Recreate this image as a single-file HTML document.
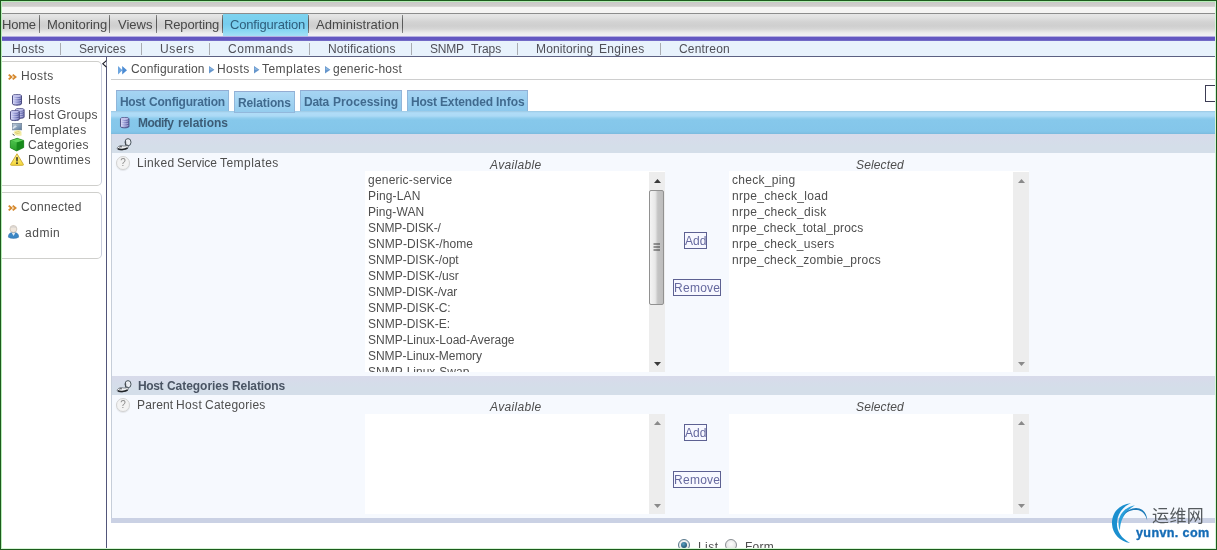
<!DOCTYPE html>
<html><head><meta charset="utf-8"><title>Centreon - Modify relations</title>
<style>
html,body{margin:0;padding:0;}
body{width:1217px;height:550px;overflow:hidden;position:relative;background:#fff;font-family:"Liberation Sans","Noto Sans CJK SC",sans-serif;font-size:12px;color:#4a4a4a;}
.a{position:absolute;}
.t{position:absolute;white-space:nowrap;line-height:14px;height:14px;font-size:12px;z-index:10;}
svg{position:absolute;overflow:visible;}
#frame{left:0;top:0;width:1215px;height:548px;border:1px solid #1d5c1d;z-index:50;}
#frame2{left:1px;top:1px;width:1213px;height:546px;border:1px solid #b6eeb6;border-right-color:#d6f5d6;border-bottom-color:#d6f5d6;z-index:49;}
#top1{left:0;top:0;width:1217px;height:7px;background:linear-gradient(#c4c4c4 0,#c6c6c6 2px,#cdcbca 3px,#d0cdcc 6px,#e0dedd 7px);}
#top2{left:0;top:7px;width:1217px;height:6px;background:#f5f4f3;}
#menu{left:0;top:13px;width:1217px;height:23px;background:linear-gradient(#8c8c8c 0,#8c8c8c 1px,#e6e6e6 1px,#e2e2e2 4px,#d3d3d3 9px,#cfcfcf 13px,#d6d6d6 16px,#ececec 20px,#f1f0f4 23px);}
.msep{position:absolute;top:15px;width:1px;height:18px;background:linear-gradient(#8a8a8a,#5a5a5a 30%,#5a5a5a 70%,#8a8a8a);}
#cfg{left:223px;top:14px;width:85px;height:22px;background:linear-gradient(#7ed3ef 0,#76cdee 10px,#86d6f2 16px,#a4e0f6 22px);}
#purple{left:0;top:36px;width:1217px;height:5px;background:linear-gradient(#b9b3e2 0,#b0aade 1px,#6357c1 1px,#6357c1 4px,#6a60c4 4px,#7a74c8 5px);}
#sub{left:0;top:41px;width:1217px;height:15px;background:#e8f2fc;}
#subline{left:0;top:56px;width:1217px;height:1px;background:#5c6082;}
.ssep{position:absolute;top:43px;width:1px;height:12px;background:#a9acb2;}
.sbox{position:absolute;border:1px solid #cfcfcc;border-left:none;border-right-color:#c9cddd;border-radius:0 5px 5px 0;background:#fff;box-sizing:border-box;}
#vline{left:106px;top:57px;width:1px;height:493px;background:#52567a;}
#crumbline{left:111px;top:79px;width:1106px;height:1px;background:#cecece;}
.tab{position:absolute;top:90px;height:22px;box-sizing:border-box;border:1px solid #90b6da;border-top-color:#94acd2;border-bottom:none;background:linear-gradient(#a6d4f2,#8cc8ec);}
.tab.act{top:91px;height:22px;border-bottom:1px solid #92b8dc;background:linear-gradient(#b0daf5,#94ccee);z-index:3;}
#hdr{left:111px;top:111px;width:1106px;height:23px;background:linear-gradient(#9cc6e0 0,#a6d4f0 1px,#b0dcf7 2px,#acdaf6 5px,#92ceee 7px,#86c8eb 9px,#84c6ea 20px,#80c0e4 22px,#7ab8dc 23px);}
.grayrow{position:absolute;left:111px;width:1106px;background:linear-gradient(#d8daea 0,#d6dcea 5px,#d4dee9 12px,#d4dee9 100%);}
.row{position:absolute;left:111px;width:1106px;background:#f6f9fe;}
.lb{position:absolute;background:#fff;width:300px;}
.sb{position:absolute;right:0;top:0;width:16px;height:100%;background:#ededed;}
.thumb{position:absolute;box-sizing:border-box;border:1px solid #919191;border-radius:2px;background:linear-gradient(90deg,#f4f4f4 0,#e8e8e8 40%,#c4c4c4 60%,#bdbdbd 100%);}
.btn{position:absolute;border:1px solid #5d6192;background:#f7f8ff;box-sizing:border-box;height:17px;}
.radio{position:absolute;width:12px;height:12px;border-radius:50%;box-sizing:border-box;border:1px solid #8a8f94;background:radial-gradient(circle at 50% 40%,#fdfdfd 0,#d8d8d8 100%);}
.q{position:absolute;width:14px;height:14px;box-sizing:border-box;border:1px solid #d2d2d2;border-radius:50%;background:#f3f3f3;box-shadow:0 1px 1px rgba(0,0,0,0.08);color:#8c8c8c;font-size:10px;line-height:12px;text-align:center;will-change:transform;z-index:4;}
#wm1{left:1152px;top:504.5px;font-size:17px;line-height:24px;height:24px;color:#555a5e;letter-spacing:0.4px;will-change:transform;white-space:nowrap;z-index:5;}
#wm2{left:1135.5px;top:523px;font-size:12.6px;line-height:20px;font-weight:bold;color:#156cb6;letter-spacing:0.35px;-webkit-text-stroke:0.35px #156cb6;will-change:transform;white-space:nowrap;z-index:5;}
</style></head><body>
<div id="top1" class="a"></div>
<div id="top2" class="a"></div>
<div id="menu" class="a"></div>
<div id="cfg" class="a"></div>
<i class="msep" style="left:39px"></i><i class="msep" style="left:109px"></i><i class="msep" style="left:156px"></i><i class="msep" style="left:222px"></i><i class="msep" style="left:308px"></i><i class="msep" style="left:402px"></i>
<div id="purple" class="a"></div>
<div id="sub" class="a"></div>
<div id="subline" class="a"></div>
<i class="ssep" style="left:60px"></i><i class="ssep" style="left:141px"></i><i class="ssep" style="left:209px"></i><i class="ssep" style="left:309px"></i><i class="ssep" style="left:411px"></i><i class="ssep" style="left:517px"></i><i class="ssep" style="left:660px"></i>

<!-- sidebar -->
<div class="sbox" style="left:0;top:61px;width:102px;height:125px;"></div>
<div class="sbox" style="left:0;top:192px;width:102px;height:67px;"></div>
<div id="vline" class="a"></div>
<svg width="0" height="0" style="left:0;top:0">
  <defs>
    <linearGradient id="gdb" x1="0" y1="0" x2="1" y2="0"><stop offset="0" stop-color="#dcdef8"/><stop offset="0.38" stop-color="#a0a4dc"/><stop offset="1" stop-color="#4a4e98"/></linearGradient>
    <linearGradient id="gcube1" x1="0" y1="0" x2="0" y2="1"><stop offset="0" stop-color="#4cc04c"/><stop offset="1" stop-color="#28a028"/></linearGradient>
    <linearGradient id="gtpl" x1="0" y1="0" x2="1" y2="1"><stop offset="0" stop-color="#c4d0dc"/><stop offset="1" stop-color="#58789c"/></linearGradient>
    <linearGradient id="gwarn" x1="0" y1="0" x2="0" y2="1"><stop offset="0" stop-color="#fdf08a"/><stop offset="1" stop-color="#f4d63a"/></linearGradient>
  </defs>
</svg>
<svg style="left:8px;top:73.5px" width="8" height="6"><path d="M0.7 0.6 L3.5 3 L0.7 5.4 M4.7 0.6 L7.5 3 L4.7 5.4" fill="none" stroke="#d68a30" stroke-width="1.9"/></svg>
<svg style="left:8px;top:204.5px" width="8" height="6"><path d="M0.7 0.6 L3.5 3 L0.7 5.4 M4.7 0.6 L7.5 3 L4.7 5.4" fill="none" stroke="#d68a30" stroke-width="1.9"/></svg>
<svg style="left:12px;top:94px" width="10" height="12"><path d="M0.5 1.8 C0.5 0.2 9.5 0.2 9.5 1.8 V9.8 C9.5 11.6 0.5 11.6 0.5 9.8 Z" fill="url(#gdb)" stroke="#4c4c80" stroke-width="1"/>
      <path d="M1 3.9 C2.5 4.9 7.5 4.9 9 3.9 M1 6.3 C2.5 7.3 7.5 7.3 9 6.3 M1 8.6 C2.5 9.6 7.5 9.6 9 8.6" fill="none" stroke="#e4e4fa" stroke-width="0.7" opacity="0.8"/>
      <ellipse cx="5" cy="1.9" rx="4" ry="1.1" fill="#c8c8ee" opacity="0.9"/></svg>
<svg style="left:14.5px;top:108px" width="10" height="12"><g transform="scale(0.96,0.93)"><path d="M0.5 1.8 C0.5 0.2 9.5 0.2 9.5 1.8 V9.8 C9.5 11.6 0.5 11.6 0.5 9.8 Z" fill="url(#gdb)" stroke="#4c4c80" stroke-width="1"/>
      <path d="M1 3.9 C2.5 4.9 7.5 4.9 9 3.9 M1 6.3 C2.5 7.3 7.5 7.3 9 6.3 M1 8.6 C2.5 9.6 7.5 9.6 9 8.6" fill="none" stroke="#e4e4fa" stroke-width="0.7" opacity="0.8"/>
      <ellipse cx="5" cy="1.9" rx="4" ry="1.1" fill="#c8c8ee" opacity="0.9"/></g></svg>
<svg style="left:10px;top:110.2px" width="10" height="12"><g transform="scale(0.98,0.95)"><path d="M0.5 1.8 C0.5 0.2 9.5 0.2 9.5 1.8 V9.8 C9.5 11.6 0.5 11.6 0.5 9.8 Z" fill="url(#gdb)" stroke="#4c4c80" stroke-width="1"/>
      <path d="M1 3.9 C2.5 4.9 7.5 4.9 9 3.9 M1 6.3 C2.5 7.3 7.5 7.3 9 6.3 M1 8.6 C2.5 9.6 7.5 9.6 9 8.6" fill="none" stroke="#e4e4fa" stroke-width="0.7" opacity="0.8"/>
      <ellipse cx="5" cy="1.9" rx="4" ry="1.1" fill="#c8c8ee" opacity="0.9"/></g></svg>
<svg style="left:12px;top:123px" width="10" height="13">
  <rect x="0.3" y="0.3" width="9.4" height="6.6" fill="url(#gtpl)" stroke="#6c7c90" stroke-width="0.6"/>
  <path d="M0.6 4.5 L3.2 2.2 L5 3.6 L0.6 6.5Z" fill="#e8eef4" opacity="0.8"/>
  <path d="M1.5 9.5 C3 6.5 6 6.2 9.4 8.4 L9.6 12.4 C6.5 13.4 3 12.8 1.5 9.5Z" fill="#f4eca8"/>
  <path d="M3 9.6 L7.6 8.2 M3.6 11 L8.2 9.8" stroke="#d8c868" stroke-width="0.8" fill="none"/>
  <path d="M0.6 11.2 L2.6 12.4" stroke="#44443c" stroke-width="1"/>
</svg>
<svg style="left:10px;top:138.3px" width="14" height="13.2">
  <path d="M0.3 2.6 L7.2 0.3 L13.7 2.4 L13.7 9.6 L6.6 13 L0.3 9.8 Z" fill="#27a127"/>
  <path d="M0.3 2.6 L7.2 0.3 L13.7 2.4 L6.8 4.6 Z" fill="#5fd25a"/>
  <path d="M0.3 2.6 L6.8 4.6 L6.6 13 L0.3 9.8 Z" fill="url(#gcube1)"/>
  <path d="M6.8 4.6 L13.7 2.4 L13.7 9.6 L6.6 13 Z" fill="#178a1c"/>
  <path d="M0.3 2.6 L7.2 0.3 L13.7 2.4 L13.7 9.6 L6.6 13 L0.3 9.8 Z" fill="none" stroke="#1d7a1d" stroke-width="0.6"/>
</svg>
<svg style="left:10px;top:153px" width="14" height="13">
  <path d="M7 0.8 L13.4 11.4 Q13.6 12.3 12.6 12.3 L1.4 12.3 Q0.4 12.3 0.6 11.4 Z" fill="url(#gwarn)" stroke="#c9a62a" stroke-width="0.9" stroke-linejoin="round"/>
  <path d="M6.2 4.2 h1.6 l-0.3 4.4 h-1 Z" fill="#1c1c1c"/><rect x="6.2" y="9.4" width="1.6" height="1.5" fill="#1c1c1c"/>
</svg>
<svg style="left:7.5px;top:225.3px" width="11" height="13.6">
  <path d="M0.4 12.2 C0.2 8.6 2.4 7.4 5.4 7.4 C8.6 7.4 10.8 8.6 10.6 12.2 C8 13.8 3 13.8 0.4 12.2 Z" fill="#3b86c4" stroke="#2a6aa4" stroke-width="0.5"/>
  <path d="M3.8 8 L5.6 11 L7.2 8 Z" fill="#dfeaf4"/>
  <circle cx="5.4" cy="4" r="3.5" fill="#efe6dc" stroke="#b8aca0" stroke-width="0.6"/>
  <path d="M2.2 3.2 C3 0.2 8 0.2 8.8 3.4 C7 2.4 4 2.4 2.2 3.2Z" fill="#d8d4d0"/>
</svg>
<svg style="left:102px;top:60px" width="5" height="8"><path d="M4.4 0.6 L0.8 3.8 L4.4 7" fill="#fff" stroke="#1c1c28" stroke-width="1.1"/></svg>
<svg style="left:118.4px;top:65.6px" width="9.2" height="8.6">
  <path d="M0 0 L4.4 4.3 L0 8.6 Z" fill="#6ea6e0"/><path d="M4.2 0 L9 4.3 L4.2 8.6 Z" fill="#4c8cd4"/>
</svg>
<svg style="left:208.6px;top:66.4px" width="6" height="8"><path d="M0 0 L5.4 3.7 L0 7.4 Z" fill="#6696cc"/><path d="M0.6 1.2 L4.2 3.7 L0.6 3.7 Z" fill="#8eb8e2"/></svg>
<svg style="left:253.5px;top:66.4px" width="6" height="8"><path d="M0 0 L5.4 3.7 L0 7.4 Z" fill="#6696cc"/><path d="M0.6 1.2 L4.2 3.7 L0.6 3.7 Z" fill="#8eb8e2"/></svg>
<svg style="left:324.5px;top:66.4px" width="6" height="8"><path d="M0 0 L5.4 3.7 L0 7.4 Z" fill="#6696cc"/><path d="M0.6 1.2 L4.2 3.7 L0.6 3.7 Z" fill="#8eb8e2"/></svg>
<svg style="left:119.7px;top:117.2px;z-index:4" width="10" height="12"><g transform="scale(0.94,0.97)"><path d="M0.5 1.8 C0.5 0.2 9.5 0.2 9.5 1.8 V9.8 C9.5 11.6 0.5 11.6 0.5 9.8 Z" fill="url(#gdb)" stroke="#4c4c80" stroke-width="1"/>
      <path d="M1 3.9 C2.5 4.9 7.5 4.9 9 3.9 M1 6.3 C2.5 7.3 7.5 7.3 9 6.3 M1 8.6 C2.5 9.6 7.5 9.6 9 8.6" fill="none" stroke="#e4e4fa" stroke-width="0.7" opacity="0.8"/>
      <ellipse cx="5" cy="1.9" rx="4" ry="1.1" fill="#c8c8ee" opacity="0.9"/></g></svg>
<svg style="left:117px;top:137.8px;z-index:4" width="15" height="12"><path d="M0.4 9.6 C1.6 7.8 4.2 7.2 6.6 8 C8 8.2 9.4 7.8 10.8 7.4 C11.8 8.2 11.4 9.8 10 10.6 C7.4 11.8 3.4 12.2 1.6 11.6 C0.4 11.2 0 10.4 0.4 9.6 Z" fill="#f2f4f6" stroke="#50565e" stroke-width="0.7"/>
      <path d="M0.8 10.6 C2.6 12 7.4 11.8 10.6 10" fill="none" stroke="#202428" stroke-width="1.5"/>
      <path d="M2.4 9.2 C3.2 8.6 4.4 8.6 5 9" fill="none" stroke="#2c3036" stroke-width="1"/>
      <ellipse cx="11" cy="4.2" rx="3" ry="3.6" fill="#eef1f4" fill-opacity="0.85" stroke="#4c5860" stroke-width="1"/>
      <path d="M8.6 3.2 L8.8 7.4" fill="none" stroke="#3c4248" stroke-width="1"/>
      <path d="M8.6 7.2 C9.6 6.6 11 7 11.6 7.8" fill="none" stroke="#6a7078" stroke-width="0.9"/></svg>
<svg style="left:117px;top:379.8px;z-index:4" width="15" height="12"><path d="M0.4 9.6 C1.6 7.8 4.2 7.2 6.6 8 C8 8.2 9.4 7.8 10.8 7.4 C11.8 8.2 11.4 9.8 10 10.6 C7.4 11.8 3.4 12.2 1.6 11.6 C0.4 11.2 0 10.4 0.4 9.6 Z" fill="#f2f4f6" stroke="#50565e" stroke-width="0.7"/>
      <path d="M0.8 10.6 C2.6 12 7.4 11.8 10.6 10" fill="none" stroke="#202428" stroke-width="1.5"/>
      <path d="M2.4 9.2 C3.2 8.6 4.4 8.6 5 9" fill="none" stroke="#2c3036" stroke-width="1"/>
      <ellipse cx="11" cy="4.2" rx="3" ry="3.6" fill="#eef1f4" fill-opacity="0.85" stroke="#4c5860" stroke-width="1"/>
      <path d="M8.6 3.2 L8.8 7.4" fill="none" stroke="#3c4248" stroke-width="1"/>
      <path d="M8.6 7.2 C9.6 6.6 11 7 11.6 7.8" fill="none" stroke="#6a7078" stroke-width="0.9"/></svg>
<!-- scrollbar arrows -->
<svg style="left:654px;top:179.3px;z-index:6" width="7" height="4" fill="#3a3a3a"><path d="M0 4 L3.5 0 L7 4 Z"/></svg>
<svg style="left:654px;top:361.5px;z-index:6" width="7" height="4" fill="#3a3a3a"><path d="M0 0 L3.5 4 L7 0 Z"/></svg>
<svg style="left:653px;top:243px;z-index:6" width="8" height="9"><path d="M0.5 1 H7 M0.5 4 H7 M0.5 7 H7" stroke="#3c3c3c" stroke-width="1.2"/></svg>
<svg style="left:1018px;top:179.3px;z-index:6" width="7" height="4" fill="#8a8a8a"><path d="M0 4 L3.5 0 L7 4 Z"/></svg>
<svg style="left:1018px;top:361.5px;z-index:6" width="7" height="4" fill="#8a8a8a"><path d="M0 0 L3.5 4 L7 0 Z"/></svg>
<svg style="left:654px;top:421.3px;z-index:6" width="7" height="4" fill="#8a8a8a"><path d="M0 4 L3.5 0 L7 4 Z"/></svg>
<svg style="left:654px;top:503.5px;z-index:6" width="7" height="4" fill="#8a8a8a"><path d="M0 0 L3.5 4 L7 0 Z"/></svg>
<svg style="left:1018px;top:421.3px;z-index:6" width="7" height="4" fill="#8a8a8a"><path d="M0 4 L3.5 0 L7 4 Z"/></svg>
<svg style="left:1018px;top:503.5px;z-index:6" width="7" height="4" fill="#8a8a8a"><path d="M0 0 L3.5 4 L7 0 Z"/></svg>
<!-- watermark swirl -->
<svg style="left:1111px;top:502px;z-index:5" width="38" height="42" viewBox="0 0 38 42">
  <path d="M20 1.2 C7 2.5 0.5 12 1 22 C1.5 32 9 39.5 19 41 C10 36 5.5 29 6 20.5 C6.5 11.5 12 4.5 20 1.2 Z" fill="#1b8fcf"/>
  <path d="M24 3.2 C14 5 7.5 12.5 7.5 21.5 C7.5 24 8 26.5 9 28.5 C8.8 19 13.5 9.5 24 3.2 Z" fill="#2aa0dc"/>
  <path d="M11.5 14.5 C16 6.5 25.5 3.5 31.5 8 C34.5 10.5 36.2 14 36.2 18.5 C34.5 12 31 8.6 26 8 C20 7.4 14.8 10 11.5 14.5 Z" fill="#1b7ab8"/>
</svg>


<div id="crumbline" class="a"></div>
<div class="a" style="left:1205px;top:85px;width:14px;height:17px;box-sizing:border-box;border:1px solid #3c3c54;background:#fff"></div>

<div class="tab" style="left:116px;width:113px;"></div>
<div class="tab act" style="left:234px;width:61px;"></div>
<div class="tab" style="left:300px;width:102px;"></div>
<div class="tab" style="left:407px;width:121px;"></div>
<div id="hdr" class="a"></div>
<div class="grayrow" style="top:134px;height:19px;"></div>
<div class="row" style="top:153px;height:223px;"></div>
<div class="grayrow" style="top:376px;height:19px;"></div>
<div class="row" style="top:395px;height:123px;"></div>
<div class="a" style="left:111px;top:518px;width:1106px;height:5px;background:#cad1e4"></div>
<div class="a" style="left:111px;top:134px;width:1px;height:384px;background:#c6ced9"></div>

<div class="lb" style="left:365px;top:171px;height:201px;"><div class="sb" style="top:1px;height:200px"></div>
  <div class="thumb" style="left:284px;top:19px;width:15px;height:115px"></div>
</div>
<div class="lb" style="left:729px;top:171px;height:201px;"><div class="sb" style="top:1px;height:200px"></div></div>
<div class="lb" style="left:365px;top:414px;height:100px;"><div class="sb"></div></div>
<div class="lb" style="left:729px;top:414px;height:100px;"><div class="sb"></div></div>
<div class="btn" style="left:684px;top:232px;width:23px;"></div>
<div class="btn" style="left:673px;top:279px;width:48px;"></div>
<div class="btn" style="left:684px;top:424px;width:23px;"></div>
<div class="btn" style="left:673px;top:471px;width:48px;"></div>

<div class="q" style="left:116px;top:156px">?</div>
<div class="q" style="left:116px;top:398px">?</div>
<div class="radio" style="left:678px;top:539px;border-color:#5a7a8c"><div class="a" style="left:2px;top:2px;width:6px;height:6px;border-radius:50%;background:radial-gradient(circle at 40% 35%,#5aa0c0,#103c58)"></div></div>
<div class="radio" style="left:725px;top:539px"></div>

<div id="txt" class="a" style="left:0;top:0;width:1217px;height:550px;will-change:transform;z-index:10;">
<span class="t" style="left:2.00px;top:18.00px;letter-spacing:-0.210px;color:#484848;font-size:13px;">Home</span>
<span class="t" style="left:47.00px;top:18.00px;letter-spacing:-0.060px;color:#484848;font-size:13px;">Monitoring</span>
<span class="t" style="left:118.00px;top:18.00px;letter-spacing:0.000px;color:#484848;font-size:13px;">Views</span>
<span class="t" style="left:164.00px;top:18.00px;letter-spacing:-0.142px;color:#484848;font-size:13px;">Reporting</span>
<span class="t" style="left:230.00px;top:18.00px;letter-spacing:-0.179px;color:#2f5f7c;font-size:13px;">Configuration</span>
<span class="t" style="left:316.00px;top:18.00px;letter-spacing:0.042px;color:#484848;font-size:13px;">Administration</span>
<span class="t" style="left:12.00px;top:42.00px;letter-spacing:0.406px;color:#505058;">Hosts</span>
<span class="t" style="left:79.00px;top:42.00px;letter-spacing:0.089px;color:#505058;">Services</span>
<span class="t" style="left:160.00px;top:42.00px;letter-spacing:0.650px;color:#505058;">Users</span>
<span class="t" style="left:228.00px;top:42.00px;letter-spacing:0.526px;color:#505058;">Commands</span>
<span class="t" style="left:328.00px;top:42.00px;letter-spacing:0.172px;color:#505058;">Notifications</span>
<span class="t" style="left:430.00px;top:42.00px;letter-spacing:-0.210px;color:#505058;">SNMP</span>
<span class="t" style="left:471.00px;top:42.00px;letter-spacing:0.000px;color:#505058;">Traps</span>
<span class="t" style="left:536.00px;top:42.00px;letter-spacing:0.140px;color:#505058;">Monitoring</span>
<span class="t" style="left:599.00px;top:42.00px;letter-spacing:0.329px;color:#505058;">Engines</span>
<span class="t" style="left:679.00px;top:42.00px;letter-spacing:0.193px;color:#505058;">Centreon</span>
<span class="t" style="left:131.00px;top:62.00px;letter-spacing:0.180px;color:#4e4e4e;">Configuration</span>
<span class="t" style="left:217.00px;top:62.00px;letter-spacing:0.384px;color:#4e4e4e;">Hosts</span>
<span class="t" style="left:262.00px;top:62.00px;letter-spacing:0.451px;color:#4e4e4e;">Templates</span>
<span class="t" style="left:333.00px;top:62.00px;letter-spacing:0.254px;color:#4e4e4e;">generic-host</span>
<span class="t" style="left:21.00px;top:69.00px;letter-spacing:0.384px;color:#4e4e4e;">Hosts</span>
<span class="t" style="left:28.00px;top:93.00px;letter-spacing:0.451px;color:#4e4e4e;">Hosts</span>
<span class="t" style="left:28.00px;top:108.00px;letter-spacing:0.449px;color:#4e4e4e;">Host</span>
<span class="t" style="left:57.00px;top:108.00px;letter-spacing:0.232px;color:#4e4e4e;">Groups</span>
<span class="t" style="left:28.00px;top:123.00px;letter-spacing:0.439px;color:#4e4e4e;">Templates</span>
<span class="t" style="left:28.00px;top:138.00px;letter-spacing:0.269px;color:#4e4e4e;">Categories</span>
<span class="t" style="left:28.00px;top:153.00px;letter-spacing:0.381px;color:#4e4e4e;">Downtimes</span>
<span class="t" style="left:21.00px;top:200.00px;letter-spacing:0.304px;color:#4e4e4e;">Connected</span>
<span class="t" style="left:25.00px;top:226.00px;letter-spacing:0.517px;color:#4e4e4e;">admin</span>
<span class="t" style="left:120.00px;top:95.00px;letter-spacing:-0.350px;color:#406a8e;font-weight:bold;">Host</span>
<span class="t" style="left:149.00px;top:95.00px;letter-spacing:-0.210px;color:#406a8e;font-weight:bold;">Configuration</span>
<span class="t" style="left:238.00px;top:96.00px;letter-spacing:-0.128px;color:#406a8e;font-weight:bold;">Relations</span>
<span class="t" style="left:304.00px;top:95.00px;letter-spacing:-0.270px;color:#406a8e;font-weight:bold;">Data</span>
<span class="t" style="left:333.00px;top:95.00px;letter-spacing:0.056px;color:#406a8e;font-weight:bold;">Processing</span>
<span class="t" style="left:411.00px;top:95.00px;letter-spacing:-0.200px;color:#406a8e;font-weight:bold;">Host</span>
<span class="t" style="left:440.00px;top:95.00px;letter-spacing:-0.132px;color:#406a8e;font-weight:bold;">Extended</span>
<span class="t" style="left:496.00px;top:95.00px;letter-spacing:0.000px;color:#406a8e;font-weight:bold;">Infos</span>
<span class="t" style="left:138.00px;top:116.00px;letter-spacing:-0.550px;color:#3c5c76;font-weight:bold;">Modify</span>
<span class="t" style="left:178.00px;top:116.00px;letter-spacing:0.000px;color:#3c5c76;font-weight:bold;">relations</span>
<span class="t" style="left:138.00px;top:379.00px;letter-spacing:-0.350px;color:#4a5464;font-weight:bold;">Host</span>
<span class="t" style="left:167.00px;top:379.00px;letter-spacing:-0.044px;color:#4a5464;font-weight:bold;">Categories</span>
<span class="t" style="left:232.00px;top:379.00px;letter-spacing:-0.106px;color:#4a5464;font-weight:bold;">Relations</span>
<span class="t" style="left:137.00px;top:156.00px;letter-spacing:0.365px;color:#4e4e4e;">Linked</span>
<span class="t" style="left:177.00px;top:156.00px;letter-spacing:0.000px;color:#4e4e4e;">Service</span>
<span class="t" style="left:220.00px;top:156.00px;letter-spacing:0.451px;color:#4e4e4e;">Templates</span>
<span class="t" style="left:137.00px;top:398.00px;letter-spacing:0.154px;color:#4e4e4e;">Parent</span>
<span class="t" style="left:176.00px;top:398.00px;letter-spacing:0.358px;color:#4e4e4e;">Host</span>
<span class="t" style="left:205.00px;top:398.00px;letter-spacing:0.259px;color:#4e4e4e;">Categories</span>
<span class="t" style="left:490.00px;top:158.00px;letter-spacing:0.338px;color:#4e4e4e;font-style:italic;">Available</span>
<span class="t" style="left:856.00px;top:158.00px;letter-spacing:0.129px;color:#4e4e4e;font-style:italic;">Selected</span>
<span class="t" style="left:490.00px;top:400.00px;letter-spacing:0.338px;color:#4e4e4e;font-style:italic;">Available</span>
<span class="t" style="left:856.00px;top:400.00px;letter-spacing:0.129px;color:#4e4e4e;font-style:italic;">Selected</span>
<span class="t" style="left:368.00px;top:173.00px;letter-spacing:0.206px;color:#4e4e4e;">generic-service</span>
<span class="t" style="left:368.00px;top:189.00px;letter-spacing:0.135px;color:#4e4e4e;">Ping-LAN</span>
<span class="t" style="left:368.00px;top:205.00px;letter-spacing:0.083px;color:#4e4e4e;">Ping-WAN</span>
<span class="t" style="left:368.00px;top:221.00px;letter-spacing:-0.108px;color:#4e4e4e;">SNMP-DISK-/</span>
<span class="t" style="left:368.00px;top:237.00px;letter-spacing:0.068px;color:#4e4e4e;">SNMP-DISK-/home</span>
<span class="t" style="left:368.00px;top:253.00px;letter-spacing:0.000px;color:#4e4e4e;">SNMP-DISK-/opt</span>
<span class="t" style="left:368.00px;top:269.00px;letter-spacing:0.000px;color:#4e4e4e;">SNMP-DISK-/usr</span>
<span class="t" style="left:368.00px;top:285.00px;letter-spacing:-0.103px;color:#4e4e4e;">SNMP-DISK-/var</span>
<span class="t" style="left:368.00px;top:301.00px;letter-spacing:0.000px;color:#4e4e4e;">SNMP-DISK-C:</span>
<span class="t" style="left:368.00px;top:317.00px;letter-spacing:0.000px;color:#4e4e4e;">SNMP-DISK-E:</span>
<span class="t" style="left:368.00px;top:333.00px;letter-spacing:0.000px;color:#4e4e4e;">SNMP-Linux-Load-Average</span>
<span class="t" style="left:368.00px;top:349.00px;letter-spacing:-0.045px;color:#4e4e4e;">SNMP-Linux-Memory</span>
<span class="t" style="left:732.00px;top:173.00px;letter-spacing:0.280px;color:#4e4e4e;">check_ping</span>
<span class="t" style="left:732.00px;top:189.00px;letter-spacing:0.319px;color:#4e4e4e;">nrpe_check_load</span>
<span class="t" style="left:732.00px;top:205.00px;letter-spacing:0.297px;color:#4e4e4e;">nrpe_check_disk</span>
<span class="t" style="left:732.00px;top:221.00px;letter-spacing:0.184px;color:#4e4e4e;">nrpe_check_total_procs</span>
<span class="t" style="left:732.00px;top:237.00px;letter-spacing:0.276px;color:#4e4e4e;">nrpe_check_users</span>
<span class="t" style="left:732.00px;top:253.00px;letter-spacing:0.237px;color:#4e4e4e;">nrpe_check_zombie_procs</span>
<span class="t" style="left:685.00px;top:234.00px;letter-spacing:0.000px;color:#66699f;">Add</span>
<span class="t" style="left:674.00px;top:281.00px;letter-spacing:0.270px;color:#66699f;">Remove</span>
<span class="t" style="left:685.00px;top:426.00px;letter-spacing:0.000px;color:#66699f;">Add</span>
<span class="t" style="left:674.00px;top:473.00px;letter-spacing:0.270px;color:#66699f;">Remove</span>
<span class="t" style="left:698.00px;top:540.00px;letter-spacing:0.449px;color:#4e4e4e;">List</span>
<span class="t" style="left:745.00px;top:540.00px;letter-spacing:0.282px;color:#4e4e4e;">Form</span>
<div class="a" style="left:0;top:0;width:1217px;height:372px;overflow:hidden;">
<span class="t" style="left:368.00px;top:365.00px;letter-spacing:0.000px;color:#4e4e4e;">SNMP-Linux-Swap</span>
</div>
</div>

<div id="wm1" class="a">运维网</div>
<div id="wm2" class="a">yunvn. com</div>

<div id="frame2" class="a"></div>
<div id="frame" class="a"></div>
</body></html>
